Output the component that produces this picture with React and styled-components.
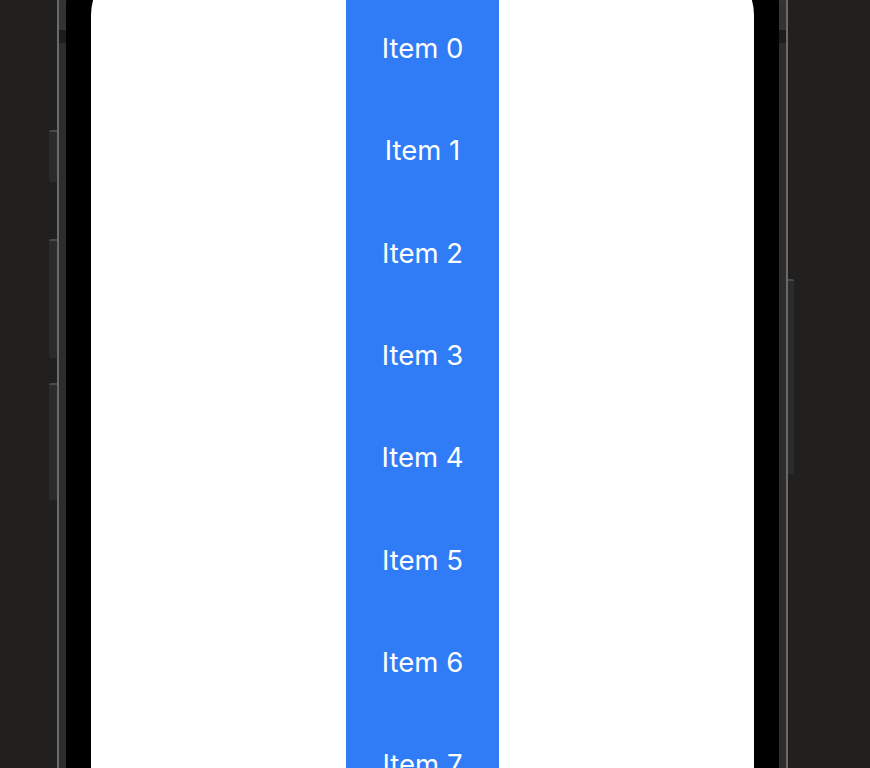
import React from "react";
import styled, { createGlobalStyle } from "styled-components";

const GlobalStyle = createGlobalStyle`
  html, body {
    margin: 0;
    padding: 0;
    height: 100%;
    background: #21201e;
    overflow: hidden;
  }
  body {
    font-family: Inter, "Noto Sans", sans-serif;
  }
`;

const Stage = styled.div`
  display: flex;
  align-items: flex-start;
  padding-left: 49px;
  height: 768px;
  overflow: hidden;
`;

const Rail = styled.div`
  display: flex;
  flex-direction: column;
  width: ${(p) => p.$width}px;
  flex-shrink: 0;
  padding-top: ${(p) => p.$top}px;
`;

const SideButton = styled.div`
  height: ${(p) => p.$height}px;
  margin-bottom: ${(p) => p.$gap || 0}px;
  background: #2b2b2b;
  border-top: 2px solid #4a4a4a;
  border-radius: ${(p) => (p.$right ? "0 2px 2px 0" : "2px 0 0 2px")};
  box-sizing: border-box;
`;

const Frame = styled.div`
  margin-top: -74px;
  width: 731px;
  height: 1100px;
  flex-shrink: 0;
  box-sizing: border-box;
  border: 2px solid #6a6a6a;
  border-radius: 78px;
  padding: 7px;
  background: linear-gradient(
    to bottom,
    #333 0,
    #333 102px,
    #1c1c1c 102px,
    #1c1c1c 115px,
    #2d2d2d 115px
  );
`;

const Bezel = styled.div`
  height: 100%;
  background: #000;
  border-radius: 72px;
  padding: 25px;
  box-sizing: border-box;
  display: flex;
`;

const Screen = styled.div`
  flex: 1;
  background: #fff;
  border-radius: 55px;
  display: flex;
  justify-content: center;
  overflow: hidden;
`;

const List = styled.div`
  width: 153px;
  background: #307cf6;
  padding-top: 37px;
  display: flex;
  flex-direction: column;
`;

const Item = styled.div`
  height: 102.3px;
  flex-shrink: 0;
  display: flex;
  align-items: center;
  justify-content: center;
  color: #fff;
  font-size: 27.5px;
  font-weight: 400;
`;

export default function App() {
  const items = Array.from({ length: 9 }, (_, i) => `Item ${i}`);
  return (
    <>
      <GlobalStyle />
      <Stage>
        <Rail $width={8} $top={130}>
          <SideButton $height={52} $gap={57} />
          <SideButton $height={119} $gap={25} />
          <SideButton $height={117} />
        </Rail>
        <Frame>
          <Bezel>
            <Screen>
              <List>
                {items.map((label) => (
                  <Item key={label}>{label}</Item>
                ))}
              </List>
            </Screen>
          </Bezel>
        </Frame>
        <Rail $width={6} $top={279}>
          <SideButton $right $height={195} />
        </Rail>
      </Stage>
    </>
  );
}
